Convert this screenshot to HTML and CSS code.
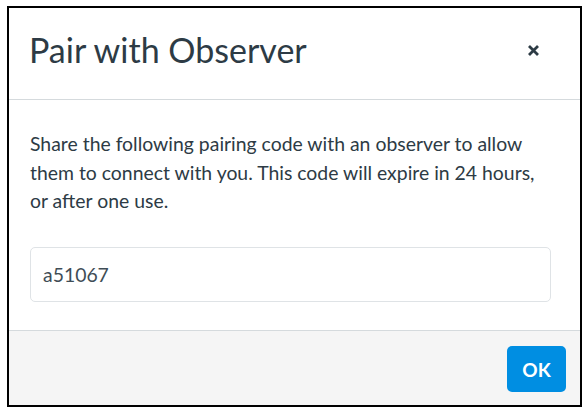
FILE: index.html
```html
<!DOCTYPE html>
<html lang="en">
<head>
<meta charset="utf-8">
<title>Pair with Observer</title>
<link rel="stylesheet" href="styles.css">
</head>
<body>
<div class="modal" role="dialog" aria-labelledby="modal-title">
  <header class="modal-header">
    <h2 class="modal-title" id="modal-title">Pair with Observer</h2>
    <button class="close-btn" type="button" aria-label="Close">
      <svg width="11" height="11" viewBox="0 0 11 11" aria-hidden="true">
        <path d="M1 1 L10 10 M10 1 L1 10" stroke="#2d3b45" stroke-width="2.8" stroke-linecap="butt" fill="none"/>
      </svg>
    </button>
  </header>
  <div class="modal-body">
    <p class="modal-text">Share the following pairing code with an observer to allow them to connect with you. This code will expire in 24 hours, or after one use.</p>
    <div class="code-field">a51067</div>
  </div>
  <footer class="modal-footer">
    <button class="ok-btn" type="button">OK</button>
  </footer>
</div>
</body>
</html>
```

FILE: styles.css
```css
html, body {
  margin: 0;
  padding: 0;
  background: #ffffff;
}

body {
  font-family: Lato, "Open Sans", "Liberation Sans", sans-serif;
  color: #2d3b45;
}

.modal {
  box-sizing: border-box;
  width: 575px;
  height: 401px;
  margin: 6px 0 0 7px;
  border: 2px solid #000000;
  background: #ffffff;
  display: flex;
  flex-direction: column;
}

.modal-header {
  height: 92px;
  box-sizing: border-box;
  padding: 0 35px 6px 20px;
  border-bottom: 1px solid #d5dadd;
  display: flex;
  align-items: center;
  justify-content: space-between;
}

.modal-title {
  margin: 0;
  font-size: 34px;
  font-weight: 400;
  line-height: 1.2;
  color: #2d3b45;
}

.close-btn {
  width: 24px;
  height: 24px;
  padding: 0;
  border: 0;
  background: transparent;
  display: flex;
  align-items: center;
  justify-content: center;
}

.modal-body {
  flex: 1;
  padding: 30px 29px 0 21px;
}

.modal-text {
  margin: 0 0 31px 0;
  font-size: 19.4px;
  line-height: 28.5px;
  color: #2d3b45;
}

.code-field {
  box-sizing: border-box;
  height: 55px;
  border: 1px solid #dfe3e6;
  border-radius: 5px;
  padding: 0 12px;
  display: flex;
  align-items: center;
  font-size: 19.4px;
  color: #3f4d56;
}

.modal-footer {
  height: 75px;
  box-sizing: border-box;
  border-top: 1px solid #d5dadd;
  background: #f5f5f5;
  padding: 15px 14px 0 0;
  display: flex;
  justify-content: flex-end;
  align-items: flex-start;
}

.ok-btn {
  width: 59px;
  height: 46px;
  border: 0;
  border-radius: 5px;
  background: #008ee2;
  color: #ffffff;
  font-family: Lato, "Open Sans", "Liberation Sans", sans-serif;
  font-size: 19px;
  font-weight: 700;
  padding: 0;
}
```
